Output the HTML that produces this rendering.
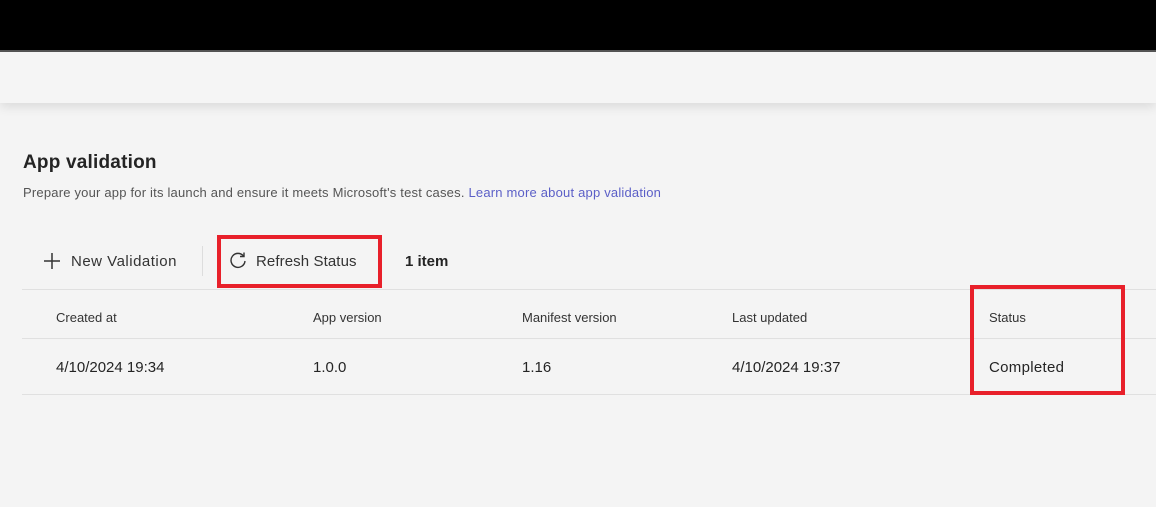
<!DOCTYPE html>
<html><head><style>
body{margin:0;width:1156px;height:507px;background:#f4f4f4;font-family:"Liberation Sans",sans-serif;position:relative;overflow:hidden;color:#242424}
.a{position:absolute;white-space:nowrap}
</style></head><body>
<div class="a" style="left:0;top:0;width:1156px;height:50px;background:#000"></div>
<div class="a" style="left:0;top:50px;width:1156px;height:2px;background:#555"></div>
<div class="a" style="left:0;top:52px;width:1156px;height:51px;background:#f5f5f5;box-shadow:0 4px 10px rgba(0,0,0,0.10)"></div>
<div class="a" style="left:23px;top:152px;font-size:19px;font-weight:bold;letter-spacing:0.2px">App validation</div>
<div class="a" style="left:23px;top:185px;font-size:13px;color:#555;letter-spacing:0.2px">Prepare your app for its launch and ensure it meets Microsoft's test cases. <span style="color:#5b5fc7">Learn more about app validation</span></div>
<svg class="a" style="left:43px;top:252px" width="18" height="18"><path d="M9 1V17M1 9H17" stroke="#333" stroke-width="1.5"/></svg>
<div class="a" style="left:71px;top:253px;font-size:15px;color:#333;letter-spacing:0.5px">New Validation</div>
<div class="a" style="left:202px;top:246px;width:1px;height:30px;background:#ddd"></div>
<svg class="a" style="left:228px;top:251px" width="20" height="20"><path d="M15.5 5A7 7 0 1 0 17 10" fill="none" stroke="#333" stroke-width="1.4"/><path d="M16 1.5V5.5H12" fill="none" stroke="#333" stroke-width="1.4"/></svg>
<div class="a" style="left:256px;top:253px;font-size:15px;color:#333;letter-spacing:0.1px">Refresh Status</div>
<div class="a" style="left:217px;top:235px;width:157px;height:45px;border:4px solid #e8202a"></div>
<div class="a" style="left:405px;top:253px;font-size:15px;font-weight:bold">1 item</div>
<div class="a" style="left:22px;top:289px;width:1134px;height:1px;background:#e0e0e0"></div>
<div class="a" style="left:22px;top:338px;width:1134px;height:1px;background:#e0e0e0"></div>
<div class="a" style="left:22px;top:394px;width:1134px;height:1px;background:#e0e0e0"></div>
<div class="a" style="left:56px;top:310px;font-size:13px;color:#333">Created at</div>
<div class="a" style="left:313px;top:310px;font-size:13px;color:#333">App version</div>
<div class="a" style="left:522px;top:310px;font-size:13px;color:#333">Manifest version</div>
<div class="a" style="left:732px;top:310px;font-size:13px;color:#333">Last updated</div>
<div class="a" style="left:989px;top:310px;font-size:13px;color:#333">Status</div>
<div class="a" style="left:56px;top:359px;font-size:15px">4/10/2024 19:34</div>
<div class="a" style="left:313px;top:359px;font-size:15px">1.0.0</div>
<div class="a" style="left:522px;top:359px;font-size:15px">1.16</div>
<div class="a" style="left:732px;top:359px;font-size:15px">4/10/2024 19:37</div>
<div class="a" style="left:989px;top:359px;font-size:15px;letter-spacing:0.3px">Completed</div>
<div class="a" style="left:970px;top:285px;width:147px;height:102px;border:4px solid #e8202a"></div>
</body></html>
